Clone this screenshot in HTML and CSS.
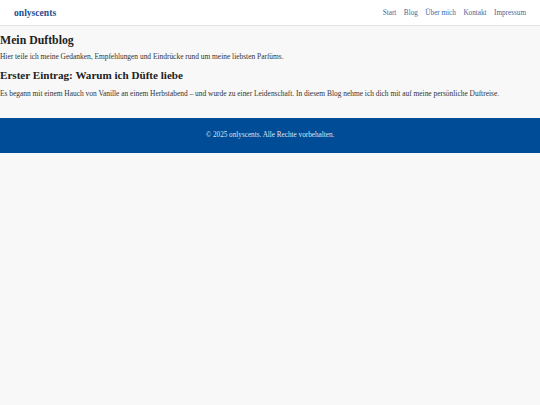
FILE: index.html
```html
<!DOCTYPE html>
<html lang="de">
<head>
<meta charset="utf-8">
<title>onlyscents</title>
<link rel="stylesheet" href="styles.css">
</head>
<body>
<header class="site-header">
  <a class="logo" href="#">onlyscents</a>
  <nav class="nav">
    <a href="#">Start</a>
    <a href="#">Blog</a>
    <a href="#">Über mich</a>
    <a href="#">Kontakt</a>
    <a href="#">Impressum</a>
  </nav>
</header>
<main class="content">
  <h1 class="title title-main">Mein Duftblog</h1>
  <p class="text">Hier teile ich meine Gedanken, Empfehlungen und Eindrücke rund um meine liebsten Parfüms.</p>
  <h2 class="title title-entry">Erster Eintrag: Warum ich Düfte liebe</h2>
  <p class="text">Es begann mit einem Hauch von Vanille an einem Herbstabend – und wurde zu einer Leidenschaft. In diesem Blog nehme ich dich mit auf meine persönliche Duftreise.</p>
</main>
<footer class="site-footer">
  <p>© 2025 onlyscents. Alle Rechte vorbehalten.</p>
</footer>
</body>
</html>
```
FILE: styles.css
```css
html, body {
  margin: 0;
  padding: 0;
  background: #f8f8f8;
  font-family: "Liberation Serif", Georgia, serif;
  color: #222;
}
.site-header {
  display: flex;
  justify-content: space-between;
  align-items: center;
  height: 25px;
  padding: 0 14px;
  background: #fff;
  border-bottom: 1px solid #e2e2e2;
}
.logo {
  color: #1d5096;
  font-weight: bold;
  font-size: 9.6px;
  text-decoration: none;
}
.nav {
  display: flex;
  gap: 7.5px;
}
.nav a {
  color: #3f679c;
  font-size: 7.2px;
  text-decoration: none;
}
.title {
  font-weight: bold;
  line-height: 1.2;
  color: #222;
}
.title-main {
  font-size: 11.8px;
  margin: 7px 0 5px;
}
.title-entry {
  font-size: 11.1px;
  margin: 7px 0 7px;
}
.text {
  font-size: 7.43px;
  line-height: 1.3;
  margin: 0 0 7px;
  color: #333;
}
.site-footer {
  margin-top: 19px;
  background: #004c97;
  height: 35px;
  display: flex;
  align-items: center;
  justify-content: center;
}
.site-footer p {
  margin: 0;
  color: #dce6f2;
  font-size: 7.2px;
}
```
